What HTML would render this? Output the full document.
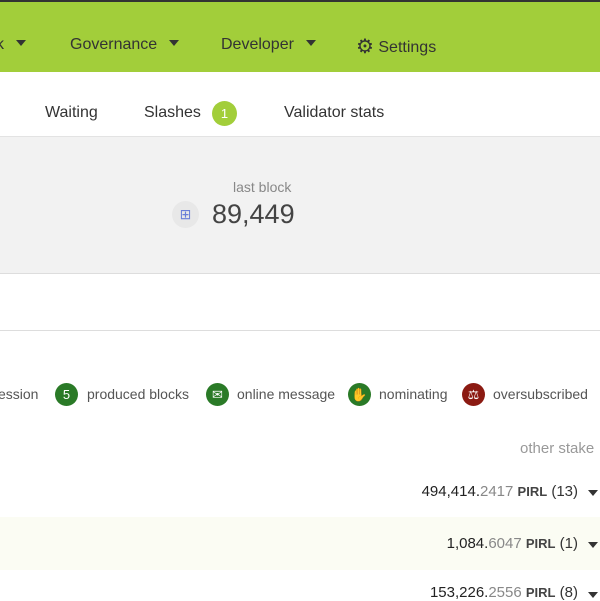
<!DOCTYPE html>
<html><head><style>
body{margin:0;width:600px;height:600px;overflow:hidden;background:#fff;font-family:"Liberation Sans",sans-serif;position:relative;color:#333}
.a{position:absolute;white-space:nowrap}
.nav{position:absolute;left:0;top:0;width:600px;height:72px;background:#a2ce3a;border-top:2px solid #333;box-sizing:border-box}
.nav .a{font-size:16px;color:#333;top:34px}
.car{display:inline-block;width:0;height:0;border-left:5px solid transparent;border-right:5px solid transparent;border-top:6px solid #333;margin-left:12px;vertical-align:3px}
.tabs .a{font-size:16px;color:#333;top:104px}
.gray{position:absolute;left:0;top:136px;width:600px;height:136px;background:#f2f2f2;border-top:1px solid #e3e3e3;border-bottom:1px solid #ddd}
.ic{display:inline-block;width:23px;height:23px;border-radius:50%;background:#2a7a27;color:#fff;font-size:13px;text-align:center;line-height:23px;vertical-align:middle}
.lg{font-size:14px;color:#555;top:386px}
.num{font-size:15px;color:#333;font-weight:normal}
.num b{font-weight:normal;color:#222}
.num .d{color:#888}.num .u{font-size:13px;font-weight:bold;color:#444}
.ar{left:588px;border-left:5px solid transparent;border-right:5px solid transparent;border-top:6px solid #333}
</style></head><body>
<div class="nav">
<div class="a" style="left:-4px">k<span class="car"></span></div>
<div class="a" style="left:70px">Governance<span class="car"></span></div>
<div class="a" style="left:221px">Developer<span class="car"></span></div>
<div class="a" style="left:356px;top:32px"><span style="font-size:20px;vertical-align:-1px">⚙</span> Settings</div>
</div>
<div class="tabs">
<div class="a" style="left:45px">Waiting</div>
<div class="a" style="left:144px">Slashes</div>
<div class="a" style="left:212px;top:101px;width:25px;height:25px;border-radius:50%;background:#a2ce3a;color:#fff;font-size:13px;text-align:center;line-height:25px">1</div>
<div class="a" style="left:284px">Validator stats</div>
</div>
<div class="gray">
<div class="a" style="left:233px;top:42px;font-size:14px;color:#888">last block</div>
<div class="a" style="left:172px;top:64px;width:27px;height:27px;border-radius:50%;background:#e8e8e8;text-align:center;line-height:27px;color:#6a7fd8;font-size:14px">⊞</div>
<div class="a" style="left:212px;top:62px;font-size:27px;color:#444">89,449</div>
</div>
<div class="a" style="left:0;top:330px;width:600px;height:1px;background:#ddd"></div>
<div class="a lg" style="left:-2px">ession</div>
<div class="a lg" style="left:55px;top:383px"><span class="ic">5</span></div>
<div class="a lg" style="left:87px">produced blocks</div>
<div class="a lg" style="left:206px;top:383px"><span class="ic">✉</span></div>
<div class="a lg" style="left:237px">online message</div>
<div class="a lg" style="left:348px;top:383px"><span class="ic">✋</span></div>
<div class="a lg" style="left:379px">nominating</div>
<div class="a lg" style="left:462px;top:383px"><span class="ic" style="background:#8b1a12">⚖</span></div>
<div class="a lg" style="left:493px">oversubscribed</div>
<div class="a" style="left:520px;top:440px;font-size:15px;color:#999">other stake</div>
<div class="a" style="left:0;top:517px;width:600px;height:53px;background:#fbfcf3"></div>
<div class="a num" style="right:22px;top:483px"><b>494,414.</b><span class="d">2417</span> <span class="u">PIRL</span> (13)</div>
<div class="a num" style="right:22px;top:535px"><b>1,084.</b><span class="d">6047</span> <span class="u">PIRL</span> (1)</div>
<div class="a num" style="right:22px;top:584px"><b>153,226.</b><span class="d">2556</span> <span class="u">PIRL</span> (8)</div>
<div class="a ar" style="top:490px"></div>
<div class="a ar" style="top:542px"></div>
<div class="a ar" style="top:592px"></div>
</body></html>
